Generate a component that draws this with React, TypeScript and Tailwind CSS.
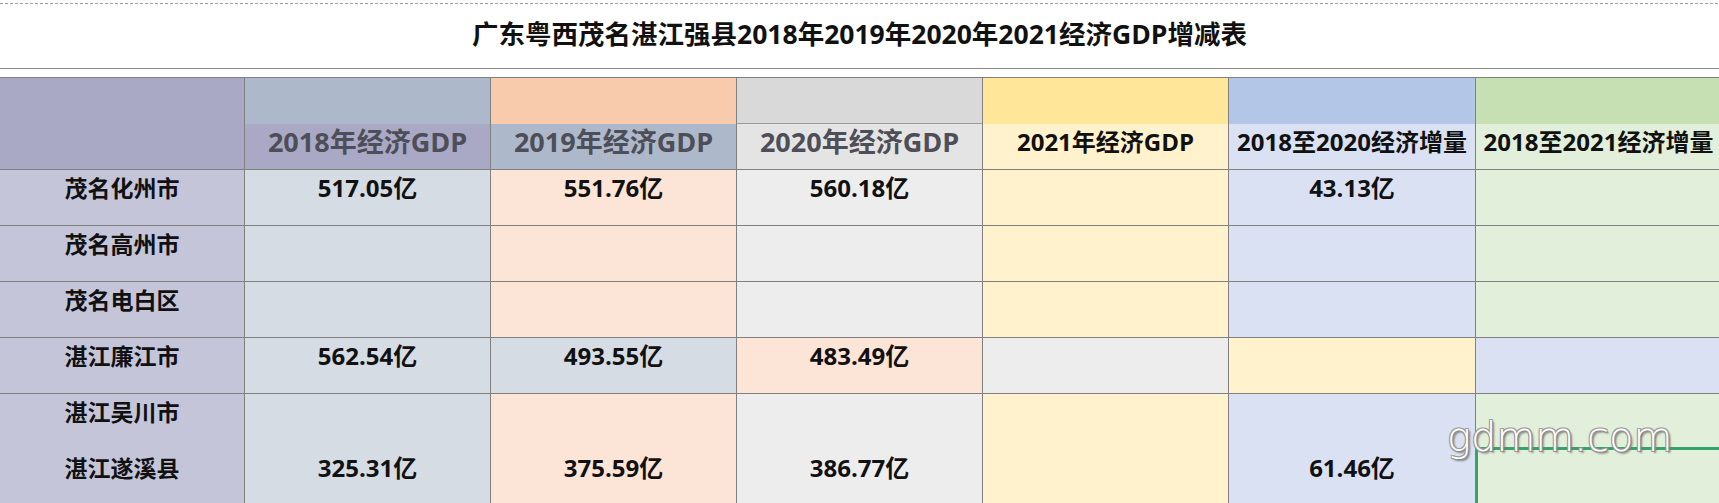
const COLS = 'grid grid-cols-[245px_246px_246px_246px_246px_247px_246px]'
const FONT = { fontFamily: '"Open Sans", "Noto Sans CJK SC", "Noto Sans", sans-serif' }

type Head = { label: string; top: string; bottom: string; big: boolean }

const heads: Head[] = [
  { label: '2018年经济GDP', top: 'bg-[#adb9ca]', bottom: 'bg-[#a9a9c6]', big: true },
  { label: '2019年经济GDP', top: 'bg-[#f8cbad]', bottom: 'bg-[#adb9ca]', big: true },
  { label: '2020年经济GDP', top: 'bg-[#d9d9d9] border-b border-[#9a9a9a]', bottom: 'bg-[#e4e4e4]', big: true },
  { label: '2021年经济GDP', top: 'bg-[#ffe699]', bottom: 'bg-[#fff2cc]', big: false },
  { label: '2018至2020经济增量', top: 'bg-[#b4c6e7]', bottom: 'bg-[#d9e1f2]', big: false },
  { label: '2018至2021经济增量', top: 'bg-[#c6e0b4]', bottom: 'bg-[#e2efda]', big: false },
]

const normal = ['bg-[#d6dce4]', 'bg-[#fce4d6]', 'bg-[#ededed]', 'bg-[#fff2cc]', 'bg-[#d9e1f2]', 'bg-[#e2efda]']
const shifted = ['bg-[#d6dce4]', 'bg-[#d6dce4]', 'bg-[#fce4d6]', 'bg-[#ededed]', 'bg-[#fff2cc]', 'bg-[#d9e1f2]']

const rows = [
  { name: '茂名化州市', values: ['517.05亿', '551.76亿', '560.18亿', '', '43.13亿', ''], colors: normal },
  { name: '茂名高州市', values: ['', '', '', '', '', ''], colors: normal },
  { name: '茂名电白区', values: ['', '', '', '', '', ''], colors: normal },
  { name: '湛江廉江市', values: ['562.54亿', '493.55亿', '483.49亿', '', '', ''], colors: shifted },
]

const last = ['325.31亿', '375.59亿', '386.77亿', '', '61.46亿', '']

function Cell({ text, bg }: { text: string; bg: string }) {
  return (
    <div className={`${bg} border-r border-b border-[#808080] h-[56px] pt-[2px] text-center`}>
      <span className="text-[24px] leading-[32px] font-bold text-[#111]">{text}</span>
    </div>
  )
}

export default function App() {
  return (
    <div className="relative w-[1719px] h-[503px] overflow-hidden bg-white flex flex-col" style={FONT}>
      <div className="h-[3px] shrink-0" />
      <div className="h-px shrink-0 bg-[repeating-linear-gradient(90deg,#a0a0a0_0px,#a0a0a0_3px,transparent_3px,transparent_5px)]" />
      <div className="h-[64px] shrink-0 flex items-center justify-center text-[26.5px] font-bold text-[#111] pb-[2px]">
        广东粤西茂名湛江强县2018年2019年2020年2021经济GDP增减表
      </div>
      <div className="h-px shrink-0 bg-[#8a8a8a]" />

      <div className="mt-[8px] border-t border-[#808080] w-[1722px]">
        <div className={COLS}>
          <div className="h-[92px] bg-[#a9a9c6] border-r border-b border-[#808080]" />
          {heads.map((h) => (
            <div key={h.label} className="h-[92px] flex flex-col border-r border-b border-[#808080]">
              <div className={`${h.top} h-[46px]`} />
              <div className={`${h.bottom} flex-1 text-center whitespace-nowrap`}>
                {h.big ? (
                  <span className="text-[27px] leading-[36px] font-bold text-[#4e4e58]">{h.label}</span>
                ) : (
                  <span className="text-[24px] leading-[36px] font-bold text-[#111]">{h.label}</span>
                )}
              </div>
            </div>
          ))}
        </div>

        {rows.map((r) => (
          <div key={r.name} className={COLS}>
            <div className="bg-[#c5c5da] border-r border-b border-[#808080] h-[56px] pt-[2px] text-center">
              <span className="text-[23px] leading-[32px] font-bold text-[#111]">{r.name}</span>
            </div>
            {r.values.map((v, i) => (
              <Cell key={i} text={v} bg={r.colors[i]} />
            ))}
          </div>
        ))}

        <div className={COLS}>
          <div className="bg-[#c5c5da] border-r border-[#808080] h-[112px] flex flex-col text-center">
            <div className="h-[56px] pt-[2px] text-[23px] leading-[32px] font-bold text-[#111]">湛江吴川市</div>
            <div className="h-[56px] pt-[2px] text-[23px] leading-[32px] font-bold text-[#111]">湛江遂溪县</div>
          </div>
          {last.map((v, i) => (
            <div key={i} className={`${normal[i]} border-r border-[#808080] h-[112px] pt-[58px] text-center`}>
              <span className="text-[24px] leading-[32px] font-bold text-[#111]">{v}</span>
            </div>
          ))}
        </div>
      </div>

      <div className="absolute left-[1475px] top-[447px] w-[260px] h-[80px] border-l-[3px] border-t-[3px] border-[#36a468]" />
      <div
        className="absolute left-[1447px] top-[413px] text-[40px] leading-[48px] text-white"
        style={{
          fontFamily: '"DejaVu Sans", sans-serif',
          fontWeight: 300,
          textShadow:
            '1px 1px 0 #8a8a8a, -1px -1px 0 #9a9a9a, 1px -1px 0 #9a9a9a, -1px 1px 0 #9a9a9a, 2px 2px 2px #777',
        }}
      >
        gdmm.com
      </div>
    </div>
  )
}
